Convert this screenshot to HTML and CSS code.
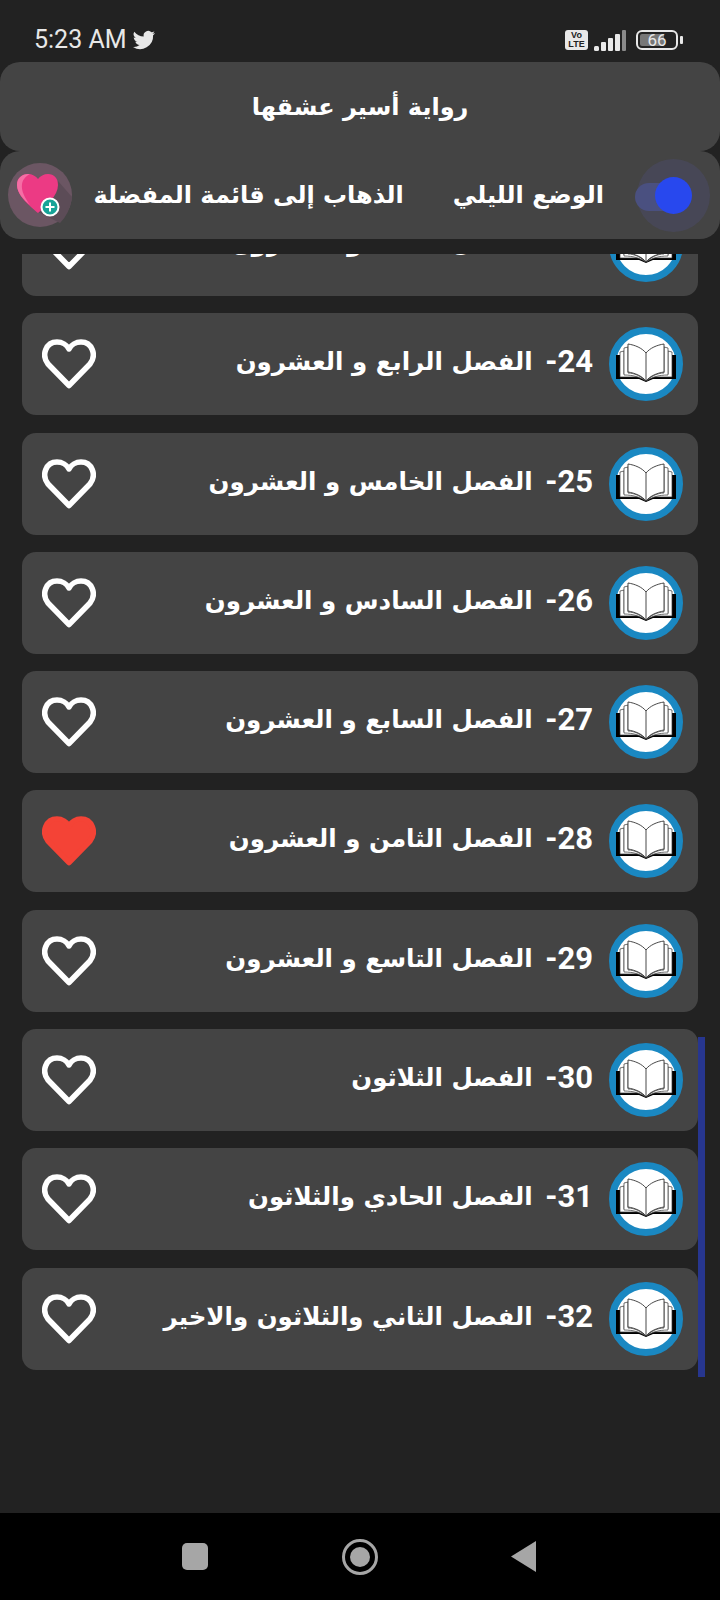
FILE: index.html
```html
<!DOCTYPE html>
<html lang="ar" dir="rtl">
<head>
    <meta charset="UTF-8">
    <meta name="viewport" content="width=device-width, initial-scale=1.0">
    <title>رواية أسير عشقها</title>
    <link rel="stylesheet" href="styles.css">
</head>
<body>
    <svg class="defs" width="0" height="0" aria-hidden="true">
        <symbol id="heart" viewBox="0 0 54 50">
            <path d="M27 46.500 L6 25 C-1 16 4 3 15 3 C20 3 25 6 27 10 C29 6 34 3 39 3 C50 3 55 16 48 25 Z"/>
        </symbol>
        <symbol id="book" viewBox="0 0 74 74">
            <circle cx="37" cy="37" r="33.500" fill="#fff" stroke="#1a88c2" stroke-width="7"/>
            <path d="M7 28 H12 V49 H62 V28 H67 V52 H44 L37 55 L30 52 H7 Z" fill="#000"/>
            <path d="M11 25 L15 24 V47 C22 47 31 49 37 54 C43 49 52 47 59 47 V24 L63 25 V50 H43 L37 54 L31 50 H11 Z" fill="#fff" stroke="#333" stroke-width=".7"/>
            <path d="M15 21 L19 20 V46 C25 46 32 49 37 54 C42 49 49 46 55 46 V20 L59 21 V48 C50 48 43 50 37 54 C31 50 24 48 15 48 Z" fill="#fff" stroke="#333" stroke-width=".7"/>
            <path d="M19 17 C26 18 33 21 37 26 C41 21 48 18 55 17 V45 C48 46 41 49 37 54 C33 49 26 46 19 45 Z" fill="#fff" stroke="#333" stroke-width=".9"/>
            <path d="M37 26 V54" stroke="#333" stroke-width=".9"/>
        </symbol>
    </svg>

    <div class="status-bar" dir="ltr">
        <div class="status-left">
            <span class="clock">5:23 AM</span>
            <svg class="twitter" viewBox="0 0 24 24"><path d="M23 5c-.8.4-1.700.6-2.600.7.900-.6 1.600-1.400 2-2.500-.9.500-1.800.9-2.900 1.100A4.600 4.600 0 0 0 11.700 8.500 13 13 0 0 1 2.300 3.700a4.600 4.600 0 0 0 1.400 6.100c-.7 0-1.400-.2-2-.6 0 2.200 1.600 4.100 3.700 4.500-.7.200-1.400.2-2.100.1.600 1.800 2.300 3.100 4.300 3.200A9.200 9.200 0 0 1 1 18.900 13 13 0 0 0 21.100 7.300c.8-.6 1.500-1.400 1.900-2.300z"/></svg>
        </div>
        <div class="status-right">
            <span class="volte">Vo<br>LTE</span>
            <svg class="signal" viewBox="0 0 32 21">
                <rect x="0" y="16" width="5" height="5" rx="1.500"/>
                <rect x="7" y="12" width="5" height="9" rx="1"/>
                <rect x="14" y="8" width="5" height="13" rx="1"/>
                <rect x="21" y="4" width="5" height="17" rx="1"/>
                <rect class="signal-off" x="28" y="0" width="4" height="21" rx="1"/>
            </svg>
            <div class="battery"><span class="battery-fill"></span><span class="battery-num">66</span></div>
            <span class="battery-tip"></span>
        </div>
    </div>

    <header class="title-bar">رواية أسير عشقها</header>

    <nav class="tool-bar">
        <div class="toggle"><span class="toggle-glow"></span><span class="toggle-track"></span><span class="toggle-knob"></span></div>
        <span class="tool-label">الوضع الليلي</span>
        <span class="tool-label">الذهاب إلى قائمة المفضلة</span>
        <div class="fav-btn">
            <svg viewBox="0 0 64 64">
                <circle cx="32" cy="32" r="32" fill="#6b5663"/>
                <path d="M30 49 L52 60 Q62 50 64 34 L50 18 Z" fill="#5c4c57"/>
                <path d="M30 50 C22 43 9 33 9 22 C9 15 14 11 20 11 C24 11 28 13 30 16 C32 13 36 11 40 11 C46 11 50 15 50 22 C50 33 38 43 30 50 Z" fill="#ec3a84"/>
                <path d="M20 11 C14 11 9 15 9 22 C9 30 16 37 22 42 C17 35 13 28 14 21 C15 16 18 13 22 11 Z" fill="#f56ea5"/>
                <circle cx="42" cy="44" r="8.500" fill="#17a398" stroke="#fff" stroke-width="2"/>
                <path d="M42 39.500 V48.500 M37.500 44 H46.500" stroke="#fff" stroke-width="2"/>
            </svg>
        </div>
    </nav>

    <main class="chapters">
        <div class="chapter">
            <svg class="book"><use href="#book"/></svg>
            <span class="chapter-name"><span class="num">23-</span> الفصل الثالث و العشرون</span>
            <svg class="fav"><use href="#heart"/></svg>
        </div>
        <div class="chapter">
            <svg class="book"><use href="#book"/></svg>
            <span class="chapter-name"><span class="num">24-</span> الفصل الرابع و العشرون</span>
            <svg class="fav"><use href="#heart"/></svg>
        </div>
        <div class="chapter">
            <svg class="book"><use href="#book"/></svg>
            <span class="chapter-name"><span class="num">25-</span> الفصل الخامس و العشرون</span>
            <svg class="fav"><use href="#heart"/></svg>
        </div>
        <div class="chapter">
            <svg class="book"><use href="#book"/></svg>
            <span class="chapter-name"><span class="num">26-</span> الفصل السادس و العشرون</span>
            <svg class="fav"><use href="#heart"/></svg>
        </div>
        <div class="chapter">
            <svg class="book"><use href="#book"/></svg>
            <span class="chapter-name"><span class="num">27-</span> الفصل السابع و العشرون</span>
            <svg class="fav"><use href="#heart"/></svg>
        </div>
        <div class="chapter">
            <svg class="book"><use href="#book"/></svg>
            <span class="chapter-name"><span class="num">28-</span> الفصل الثامن و العشرون</span>
            <svg class="fav is-on"><use href="#heart"/></svg>
        </div>
        <div class="chapter">
            <svg class="book"><use href="#book"/></svg>
            <span class="chapter-name"><span class="num">29-</span> الفصل التاسع و العشرون</span>
            <svg class="fav"><use href="#heart"/></svg>
        </div>
        <div class="chapter">
            <svg class="book"><use href="#book"/></svg>
            <span class="chapter-name"><span class="num">30-</span> الفصل الثلاثون</span>
            <svg class="fav"><use href="#heart"/></svg>
        </div>
        <div class="chapter">
            <svg class="book"><use href="#book"/></svg>
            <span class="chapter-name"><span class="num">31-</span> الفصل الحادي والثلاثون</span>
            <svg class="fav"><use href="#heart"/></svg>
        </div>
        <div class="chapter">
            <svg class="book"><use href="#book"/></svg>
            <span class="chapter-name"><span class="num">32-</span> الفصل الثاني والثلاثون والاخير</span>
            <svg class="fav"><use href="#heart"/></svg>
        </div>
        <span class="scrollbar"></span>
    </main>

    <div class="nav-bar" dir="ltr">
        <span class="nav-square"></span>
        <span class="nav-home"><span class="nav-home-dot"></span></span>
        <span class="nav-back"></span>
    </div>
</body>
</html>
```

FILE: styles.css
```css
:root {
    --bg-color: #222222;
    --panel-color: #444444;
    --text-color: #ffffff;
}

* { box-sizing: border-box; }

html, body {
    margin: 0;
    height: 1600px;
    overflow: hidden;
}

body {
    display: flex;
    flex-direction: column;
    background-color: var(--bg-color);
    color: var(--text-color);
    font-family: "DejaVu Sans", "Noto Sans", sans-serif;
}

.defs { position: absolute; }

.status-bar {
    height: 62px;
    padding: 26px 34px 0;
    display: flex;
    justify-content: space-between;
    align-items: flex-start;
    color: #e8e8e8;
    flex-shrink: 0;
}

.status-left, .status-right {
    display: flex;
    align-items: center;
}

.clock {
    font-family: Roboto, "Liberation Sans", sans-serif;
    font-size: 25px;
    line-height: 28px;
}

.twitter {
    width: 24px;
    height: 24px;
    margin-left: 5px;
    fill: #e8e8e8;
}

.status-right { height: 28px; margin-right: 3px; }

.volte {
    width: 23px;
    height: 20px;
    background-color: #e8e8e8;
    color: #222;
    border-radius: 3px;
    font: bold 9px/9px "Liberation Sans", sans-serif;
    text-align: center;
    padding-top: 1px;
}

.signal {
    width: 32px;
    height: 21px;
    margin-left: 6px;
    fill: #e8e8e8;
}

.signal-off { fill: #8a8a8a; }

.battery {
    position: relative;
    width: 42px;
    height: 20px;
    margin-left: 10px;
    border: 2px solid #e8e8e8;
    border-radius: 6px;
    text-align: center;
    font: 17px/16px Roboto, sans-serif;
}

.battery-fill {
    position: absolute;
    left: 2px;
    top: 2px;
    bottom: 2px;
    width: 24px;
    background-color: #777;
    border-radius: 2px;
}

.battery-num { position: relative; }

.battery-tip {
    width: 3px;
    height: 8px;
    margin-left: 2px;
    background-color: #e8e8e8;
    border-radius: 1px;
}

.title-bar {
    height: 89px;
    flex-shrink: 0;
    display: flex;
    align-items: center;
    justify-content: center;
    background-color: var(--panel-color);
    border-radius: 20px;
    font-size: 24px;
    font-weight: bold;
}

.tool-bar {
    height: 88px;
    flex-shrink: 0;
    display: flex;
    align-items: center;
    padding: 0 10px 0 8px;
    background-color: var(--panel-color);
    border-radius: 20px;
    font-size: 24px;
    font-weight: bold;
}

.toggle {
    position: relative;
    width: 73px;
    height: 73px;
    margin-left: 33px;
    flex-shrink: 0;
}

.toggle-glow {
    position: absolute;
    inset: 0;
    border-radius: 50%;
    background-color: rgba(78, 80, 130, .3);
}

.toggle-track {
    position: absolute;
    left: -2px;
    top: 24px;
    width: 52px;
    height: 28px;
    border-radius: 14px;
    background-color: #4a5080;
}

.toggle-knob {
    position: absolute;
    left: 18px;
    top: 18px;
    width: 37px;
    height: 37px;
    border-radius: 50%;
    background-color: #2848ee;
}

.tool-label { white-space: nowrap; }

.tool-label + .tool-label { margin-right: 49px; }

.fav-btn {
    width: 64px;
    height: 64px;
    margin-right: auto;
    flex-shrink: 0;
}

.fav-btn svg {
    display: block;
    width: 64px;
    height: 64px;
}

.chapters {
    position: relative;
    flex: 1;
    margin-top: 15px;
    padding: 0 22px;
    overflow: hidden;
}

.chapter {
    display: flex;
    align-items: center;
    height: 102px;
    margin-bottom: 17.3px;
    padding: 0 15px 0 20px;
    background-color: var(--panel-color);
    border-radius: 14px;
}

/* list is scrolled: row 23 sits mostly under the tool bar */
.chapter:first-child { margin-top: -60px; }

.book {
    width: 74px;
    height: 74px;
    flex-shrink: 0;
}

.chapter-name {
    margin-right: 16px;
    margin-bottom: 5px;
    font-size: 24.5px;
    font-weight: bold;
    white-space: nowrap;
}

.num {
    font-family: Roboto, "Liberation Sans", sans-serif;
    font-size: 31px;
    margin-left: 4px;
    vertical-align: -2px;
}

.fav {
    width: 54px;
    height: 50px;
    margin-right: auto;
    fill: none;
    stroke: #fff;
    stroke-width: 5.500;
    stroke-linejoin: round;
    flex-shrink: 0;
    overflow: visible;
}

.fav.is-on {
    fill: #f44336;
    stroke: #f44336;
}

.scrollbar {
    position: absolute;
    left: 698px;
    top: 783px;
    width: 7px;
    height: 340px;
    background-color: #27368f;
}

.nav-bar {
    height: 87px;
    flex-shrink: 0;
    display: flex;
    align-items: center;
    background-color: #000;
    padding-left: 182px;
}

.nav-square {
    width: 26px;
    height: 27px;
    background-color: #a6a6a6;
    border-radius: 5px;
}

.nav-home {
    width: 36px;
    height: 36px;
    margin-left: 134px;
    border: 3px solid #a6a6a6;
    border-radius: 50%;
    display: flex;
    align-items: center;
    justify-content: center;
}

.nav-home-dot {
    width: 20px;
    height: 20px;
    background-color: #a6a6a6;
    border-radius: 50%;
}

.nav-back {
    margin-left: 133px;
    width: 25px;
    height: 31px;
    background-color: #a6a6a6;
    clip-path: polygon(100% 0, 100% 100%, 0 50%);
}
```
